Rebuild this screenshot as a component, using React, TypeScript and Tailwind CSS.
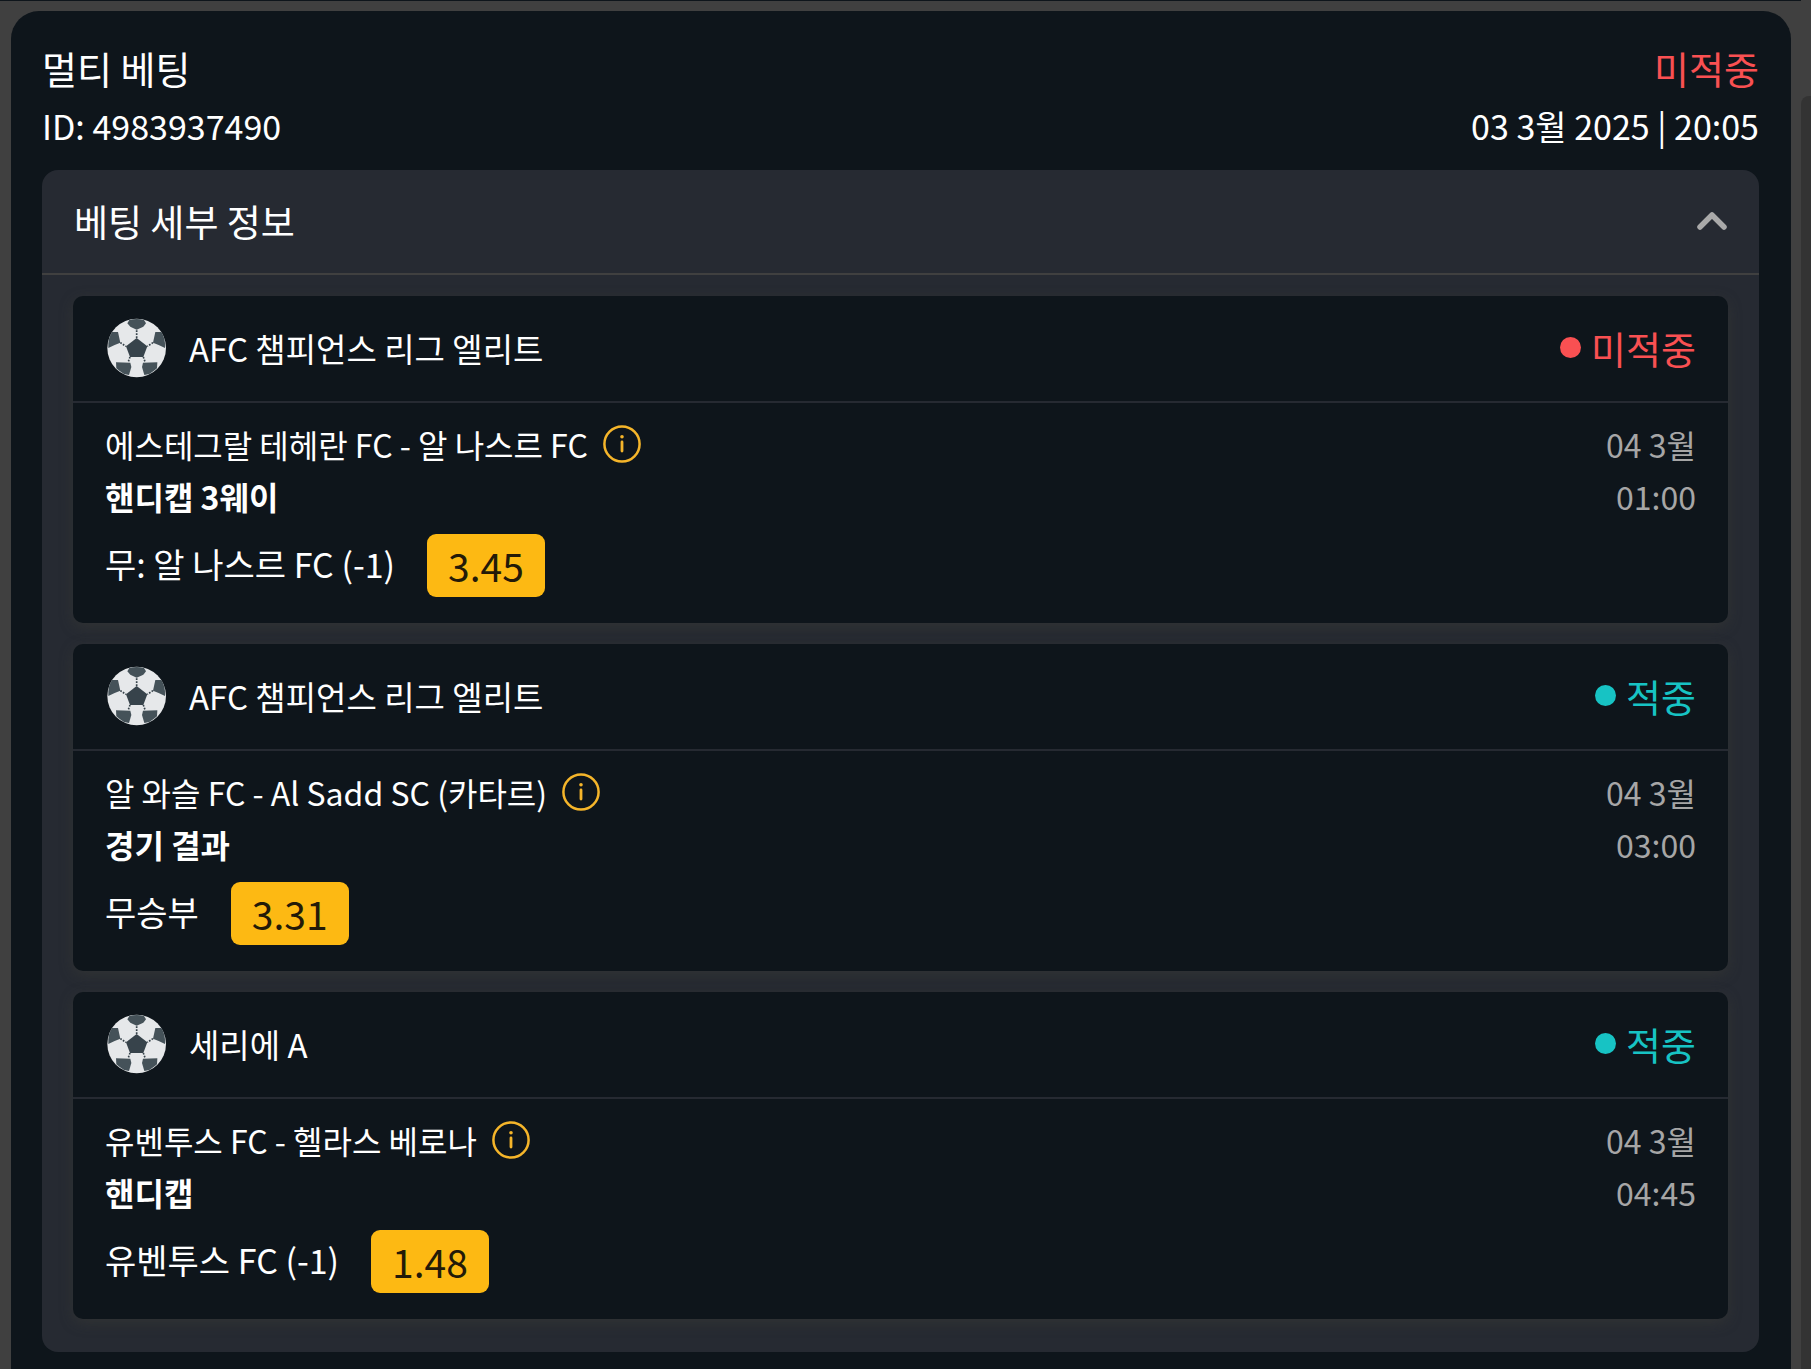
import { useState } from "react"

type Bet = {
  league: string
  won: boolean
  match: string
  market: string
  pick: string
  odds: string
  date: string
  time: string
}

const bets: Bet[] = [
  {
    league: "AFC 챔피언스 리그 엘리트",
    won: false,
    match: "에스테그랄 테헤란 FC - 알 나스르 FC",
    market: "핸디캡 3웨이",
    pick: "무: 알 나스르 FC (-1)",
    odds: "3.45",
    date: "04 3월",
    time: "01:00",
  },
  {
    league: "AFC 챔피언스 리그 엘리트",
    won: true,
    match: "알 와슬 FC - Al Sadd SC (카타르)",
    market: "경기 결과",
    pick: "무승부",
    odds: "3.31",
    date: "04 3월",
    time: "03:00",
  },
  {
    league: "세리에 A",
    won: true,
    match: "유벤투스 FC - 헬라스 베로나",
    market: "핸디캡",
    pick: "유벤투스 FC (-1)",
    odds: "1.48",
    date: "04 3월",
    time: "04:45",
  },
]

const SoccerBall = () => (
  <svg viewBox="31 34 186 186" className="size-[62px] shrink-0" aria-hidden="true">
    <circle cx="126" cy="127" r="88" fill="#e6e8ea" />
    <g fill="#455259">
      <path d="M104 43 Q126 37 148 43 L154 53 L146 63 L126 72 L107 63 L98 53Z" />
      <path d="M52 79 L70 79 L77 111 L60 118 L41 127 Q39 98 52 79Z" />
      <path d="M200 79 L182 79 L175 111 L192 118 L211 127 Q213 98 200 79Z" />
      <path d="M64 170 L107 171 L110 184 L103 208 L88 205 Q76 198 65 188Z" />
      <path d="M188 170 L145 171 L142 184 L149 208 L164 205 Q176 198 187 188Z" />
    </g>
    <path d="M126 97 L158 122 L146 154 L106 154 L94 122Z" fill="#37434b" />
    <g stroke="#37434b" strokeWidth="5" strokeDasharray="5 4">
      <path d="M126 74V97M77 111L94 122M175 111L158 122M106 154L100 171M146 154L152 171" />
    </g>
  </svg>
)

const InfoIcon = () => (
  <svg viewBox="0 0 38 38" className="size-[38px]" fill="none" aria-hidden="true">
    <circle cx="19" cy="19" r="17.6" stroke="#f5b52a" strokeWidth="2.5" />
    <circle cx="19" cy="11.8" r="1.8" fill="#f5b52a" />
    <path d="M19 17V26" stroke="#f5b52a" strokeWidth="2.8" strokeLinecap="round" />
  </svg>
)

const BetCard = ({ bet }: { bet: Bet }) => (
  <article className="rounded-[10px] bg-[#0e151b] shadow-[0_4px_14px_rgba(64,64,56,0.4)]">
    <div className="flex h-[107px] items-center justify-between border-b-2 border-[#262a32] px-8 pb-[2px]">
      <div className="flex items-center gap-[22px]">
        <SoccerBall />
        <h3 className="text-[33px] leading-[52px]">{bet.league}</h3>
      </div>
      <div
        className={`flex items-center gap-[10px] text-[38px] leading-[52px] ${
          bet.won ? "text-[#17c3c4]" : "text-[#f95052]"
        }`}
      >
        <span className="size-[21px] rounded-full bg-current" />
        {bet.won ? "적중" : "미적중"}
      </div>
    </div>

    <div className="flex justify-between px-8 pt-[15px] pb-[26px]">
      <div>
        <div className="flex items-center gap-[15px] text-[32px] leading-[52px]">
          <span>{bet.match}</span>
          <button type="button" aria-label="경기 정보">
            <InfoIcon />
          </button>
        </div>
        <p className="text-[32px] leading-[52px] font-bold">{bet.market}</p>
        <div className="mt-3 flex items-start gap-8">
          <span className="text-[34px] leading-[60px]">{bet.pick}</span>
          <span className="rounded-[9px] bg-[#fdb913] px-[21px] text-[39px] leading-[63px] text-[#231a08]">
            {bet.odds}
          </span>
        </div>
      </div>
      <div className="text-right text-[32px] leading-[52px] text-[#a6a6a6]">
        <p>{bet.date}</p>
        <p>{bet.time}</p>
      </div>
    </div>
  </article>
)

const App = () => {
  const [open, setOpen] = useState(true)

  return (
    <div className="flex min-h-screen bg-[#404040] font-['Noto_Sans_CJK_KR','Noto_Sans',sans-serif] text-white">
      <div className="flex min-w-0 flex-1 flex-col border-t border-[#0e151b]">
        <main className="mt-[10px] mr-[10px] ml-[11px] flex-1 rounded-t-[28px] bg-[#0e151b] pt-[29px] pr-8 pb-[17px] pl-[31px]">
          <header className="flex justify-between">
            <div>
              <h1 className="text-[38px] leading-[56px]">멀티 베팅</h1>
              <p className="text-[34px] leading-[60px]">ID: 4983937490</p>
            </div>
            <div className="text-right">
              <p className="text-[38px] leading-[56px] text-[#f95052]">미적중</p>
              <p className="text-[34px] leading-[60px]">03 3월 2025 | 20:05</p>
            </div>
          </header>

          <section className="mt-[14px] rounded-2xl bg-[#262a32]">
            <button
              type="button"
              aria-expanded={open}
              onClick={() => setOpen(!open)}
              className="flex h-[105px] w-full items-center justify-between border-b-2 border-[#404040] px-8 pb-[2px]"
            >
              <span className="text-[37px] leading-[56px]">베팅 세부 정보</span>
              <svg
                viewBox="0 0 30 18"
                className={open ? "h-[18px] w-[30px]" : "h-[18px] w-[30px] rotate-180"}
                fill="none"
                stroke="#a9a9a9"
                strokeWidth="5.5"
                strokeLinecap="round"
                strokeLinejoin="round"
                aria-hidden="true"
              >
                <path d="M3 15L15 3L27 15" />
              </svg>
            </button>

            {open && (
              <div className="flex flex-col gap-[21px] px-[31px] pt-[21px] pb-[33px]">
                {bets.map((bet, index) => (
                  <BetCard key={index} bet={bet} />
                ))}
              </div>
            )}
          </section>
        </main>
      </div>

      {/* Scroll track */}
      <div className="flex w-[10px] flex-col pt-24">
        <div className="flex-1 rounded-tl-lg bg-[#333333]" />
      </div>
    </div>
  )
}

export default App
